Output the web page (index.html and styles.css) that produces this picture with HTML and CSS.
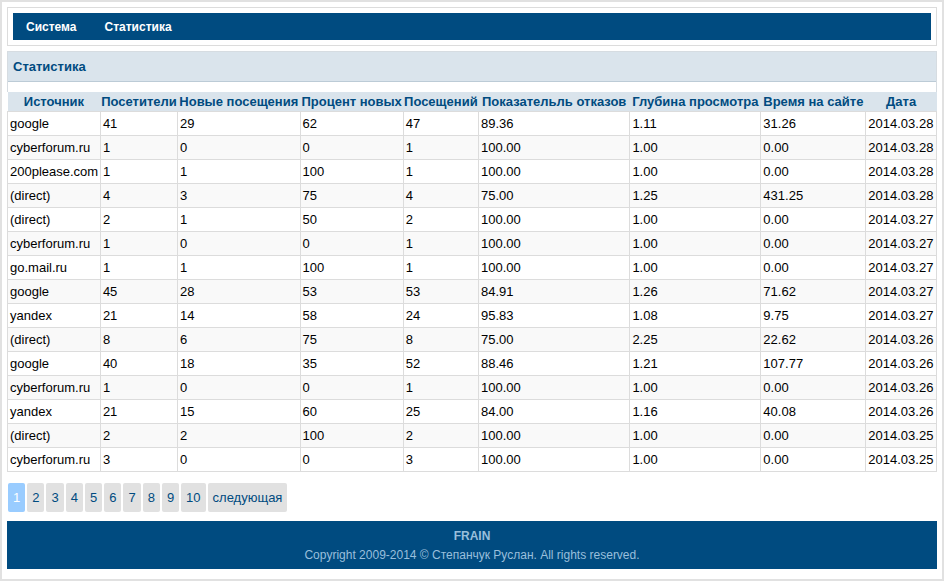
FILE: index.html
```html
<!DOCTYPE html>
<html lang="ru">
<head>
<meta charset="utf-8">
<title>Статистика</title>
<link rel="stylesheet" href="styles.css">
</head>
<body>
<div class="page">
  <header class="top">
    <nav class="menu">
      <a href="#system">Система</a>
      <a href="#stats">Статистика</a>
    </nav>
  </header>
  <main>
    <div class="heading">
      <h1>Статистика</h1>
    </div>
    <table class="stats">
      <colgroup>
        <col class="c-source"><col class="c-visitors"><col class="c-new"><col class="c-percent"><col class="c-visits"><col class="c-bounce"><col class="c-depth"><col class="c-time"><col class="c-date">
      </colgroup>
      <thead>
        <tr><th>Источник</th><th>Посетители</th><th>Новые посещения</th><th>Процент новых</th><th>Посещений</th><th>Показательль отказов</th><th>Глубина просмотра</th><th>Время на сайте</th><th>Дата</th></tr>
      </thead>
      <tbody>
        <tr><td>google</td><td>41</td><td>29</td><td>62</td><td>47</td><td>89.36</td><td>1.11</td><td>31.26</td><td>2014.03.28</td></tr>
        <tr><td>cyberforum.ru</td><td>1</td><td>0</td><td>0</td><td>1</td><td>100.00</td><td>1.00</td><td>0.00</td><td>2014.03.28</td></tr>
        <tr><td>200please.com</td><td>1</td><td>1</td><td>100</td><td>1</td><td>100.00</td><td>1.00</td><td>0.00</td><td>2014.03.28</td></tr>
        <tr><td>(direct)</td><td>4</td><td>3</td><td>75</td><td>4</td><td>75.00</td><td>1.25</td><td>431.25</td><td>2014.03.28</td></tr>
        <tr><td>(direct)</td><td>2</td><td>1</td><td>50</td><td>2</td><td>100.00</td><td>1.00</td><td>0.00</td><td>2014.03.27</td></tr>
        <tr><td>cyberforum.ru</td><td>1</td><td>0</td><td>0</td><td>1</td><td>100.00</td><td>1.00</td><td>0.00</td><td>2014.03.27</td></tr>
        <tr><td>go.mail.ru</td><td>1</td><td>1</td><td>100</td><td>1</td><td>100.00</td><td>1.00</td><td>0.00</td><td>2014.03.27</td></tr>
        <tr><td>google</td><td>45</td><td>28</td><td>53</td><td>53</td><td>84.91</td><td>1.26</td><td>71.62</td><td>2014.03.27</td></tr>
        <tr><td>yandex</td><td>21</td><td>14</td><td>58</td><td>24</td><td>95.83</td><td>1.08</td><td>9.75</td><td>2014.03.27</td></tr>
        <tr><td>(direct)</td><td>8</td><td>6</td><td>75</td><td>8</td><td>75.00</td><td>2.25</td><td>22.62</td><td>2014.03.26</td></tr>
        <tr><td>google</td><td>40</td><td>18</td><td>35</td><td>52</td><td>88.46</td><td>1.21</td><td>107.77</td><td>2014.03.26</td></tr>
        <tr><td>cyberforum.ru</td><td>1</td><td>0</td><td>0</td><td>1</td><td>100.00</td><td>1.00</td><td>0.00</td><td>2014.03.26</td></tr>
        <tr><td>yandex</td><td>21</td><td>15</td><td>60</td><td>25</td><td>84.00</td><td>1.16</td><td>40.08</td><td>2014.03.26</td></tr>
        <tr><td>(direct)</td><td>2</td><td>2</td><td>100</td><td>2</td><td>100.00</td><td>1.00</td><td>0.00</td><td>2014.03.25</td></tr>
        <tr><td>cyberforum.ru</td><td>3</td><td>0</td><td>0</td><td>3</td><td>100.00</td><td>1.00</td><td>0.00</td><td>2014.03.25</td></tr>
      </tbody>
    </table>
    <nav class="pager">
      <a class="current" href="#p1">1</a>
      <a href="#p2">2</a>
      <a href="#p3">3</a>
      <a href="#p4">4</a>
      <a href="#p5">5</a>
      <a href="#p6">6</a>
      <a href="#p7">7</a>
      <a href="#p8">8</a>
      <a href="#p9">9</a>
      <a href="#p10">10</a>
      <a href="#next">следующая</a>
    </nav>
  </main>
  <footer class="footer">
    <strong>FRAIN</strong>
    <p>Copyright 2009-2014 © Степанчук Руслан. All rights reserved.</p>
  </footer>
</div>
</body>
</html>
```
FILE: styles.css
```css
* {
  box-sizing: border-box;
}

body {
  margin: 0;
  background: #fff;
  color: #000;
  font-family: "Liberation Sans", Arial, sans-serif;
  font-size: 13px;
}

.page {
  border: 2px solid #e1e1e1;
  padding: 5px 5px 10px;
}

.top {
  border: 1px solid #dcdcdc;
  padding: 5px;
  margin-bottom: 5px;
}

.menu {
  display: flex;
  gap: 28px;
  padding: 2px 13px 0;
  background: #004b80;
  line-height: 25px;
}

.menu a {
  color: #fff;
  font-size: 12px;
  font-weight: bold;
  text-decoration: none;
}

.heading {
  border: 1px solid #d6dce1;
  border-bottom: 0;
  padding-bottom: 10px;
}

h1 {
  margin: 0;
  padding: 0 5px;
  border-bottom: 1px solid #bccbd6;
  background: #dae4ec;
  color: #004b80;
  font-size: 13px;
  line-height: 29px;
}

.stats {
  width: 100%;
  table-layout: fixed;
  border-collapse: collapse;
}

.c-source { width: 10%; }
.c-visitors { width: 8.3%; }
.c-new { width: 13.2%; }
.c-percent { width: 11.1%; }
.c-visits { width: 8.1%; }
.c-bounce { width: 16.3%; }
.c-depth { width: 14.1%; }
.c-time { width: 11.3%; }

.stats th,
.stats td {
  white-space: nowrap;
}

.stats th {
  height: 19px;
  padding: 0;
  background: #dae4ec;
  color: #004b80;
  line-height: 19px;
}

.stats td {
  height: 24px;
  padding: 0 2px;
  border: 1px solid #dcdcdc;
  line-height: 23px;
}

.stats tbody tr:nth-child(even) {
  background: #f9f9f9;
}

.pager {
  display: flex;
  flex-wrap: wrap;
  gap: 2px;
  padding: 11px 1px 9px;
}

.pager a {
  padding: 0 5px;
  border-radius: 2px;
  background: #e1e1e1;
  color: #004b80;
  line-height: 29px;
  text-decoration: none;
}

.pager .current {
  background: #99ccff;
  color: #fff;
}

.footer {
  padding: 6px 0 4px;
  background: #004b80;
  color: #99bfdc;
  font-size: 12px;
  line-height: 19px;
  text-align: center;
}

.footer p {
  margin: 0;
}
```
